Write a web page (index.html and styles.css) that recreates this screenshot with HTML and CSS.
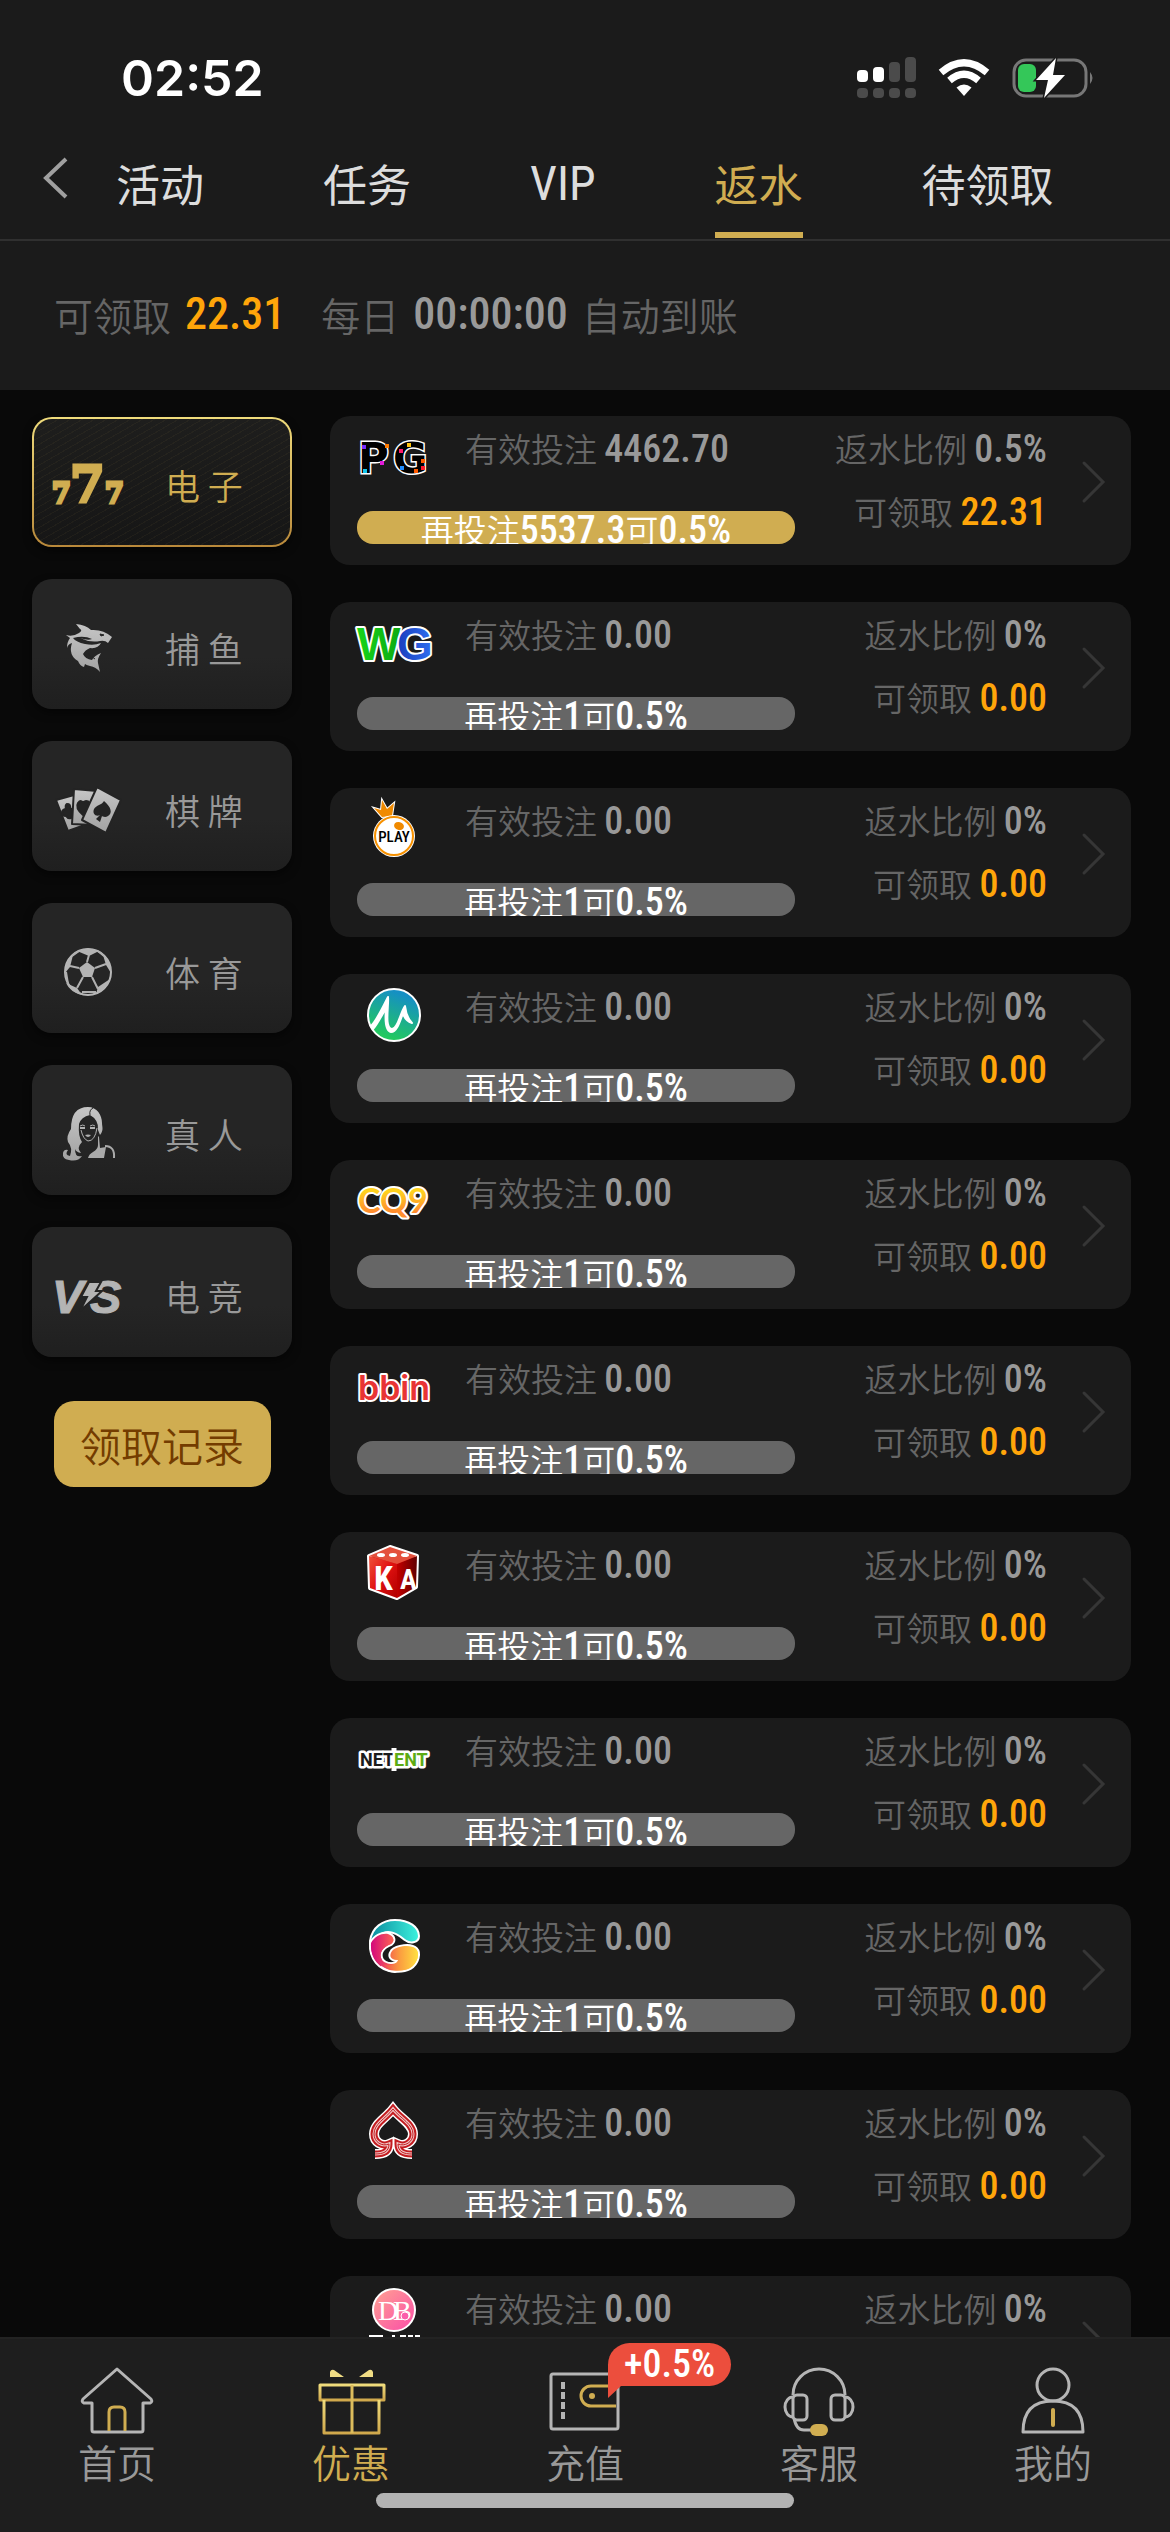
FILE: index.html
```html
<!DOCTYPE html>
<html lang="zh-CN">
<head>
<meta charset="utf-8">
<meta name="viewport" content="width=device-width, initial-scale=1">
<title>返水</title>
<link rel="stylesheet" href="styles.css">
</head>
<body>
<svg class="defs" width="0" height="0" aria-hidden="true">
  <defs>
    <linearGradient id="gold" x1="0" y1="0" x2="0" y2="1"><stop offset="0" stop-color="#f0dc7c"/><stop offset="1" stop-color="#d0a84c"/></linearGradient>
    <linearGradient id="grey" x1="0" y1="0" x2="0" y2="1"><stop offset="0" stop-color="#c6c6c6"/><stop offset="1" stop-color="#a2a2a2"/></linearGradient>
    <symbol id="chevron" viewBox="0 0 26 44"><path d="M3 3 22 22 3 41" fill="none" stroke="#363636" stroke-width="3" stroke-linecap="round"/></symbol>
  </defs>
</svg>
<div class="app">
  <header class="header">
    <div class="status">
      <time class="clock">02:52</time>
      <div class="status-icons">
        <svg width="59" height="42" viewBox="0 0 59 42" aria-hidden="true">
          <g fill="#fff"><rect x="0" y="13" width="11" height="12" rx="4"/><rect x="16" y="10" width="11" height="15" rx="4"/></g>
          <g fill="#4b4b4b"><rect x="32" y="5" width="11" height="20" rx="4"/><rect x="48" y="0" width="11" height="25" rx="4"/><rect x="0" y="31" width="11" height="10" rx="4"/><rect x="16" y="31" width="11" height="10" rx="4"/><rect x="32" y="31" width="11" height="10" rx="4"/><rect x="48" y="31" width="11" height="10" rx="4"/></g>
        </svg>
        <svg width="52" height="38" viewBox="0 0 52 38" aria-hidden="true">
          <g fill="none" stroke="#fff" stroke-width="7"><path d="M3 13.500Q26-6 49 13.500"/><path d="M11.500 21.500Q26 9 40.500 21.500"/></g>
          <path d="M18.500 28.500Q26 22.500 33.500 28.500L26 37Z" fill="#fff"/>
        </svg>
        <svg width="82" height="42" viewBox="0 0 82 42" aria-hidden="true">
          <rect x="2" y="3" width="72" height="36" rx="12" fill="none" stroke="#777" stroke-width="3"/>
          <rect x="6" y="7" width="18" height="28" rx="6" fill="#34c759"/>
          <path d="M78 15q5 6 0 12z" fill="#777"/>
          <path d="M44 1 24 23h12l-4 18 21-23H41z" fill="#fff" stroke="#1b1b1b" stroke-width="3" paint-order="stroke"/>
        </svg>
      </div>
    </div>
    <nav class="tabs">
      <button class="back" aria-label="返回"><svg width="26" height="42" viewBox="0 0 26 42"><path d="M23 2 3 21 23 40" fill="none" stroke="#a0a0a0" stroke-width="4"/></svg></button>
      <a class="tab" href="#activity">活动</a>
      <a class="tab" href="#task">任务</a>
      <a class="tab latin" href="#vip">VIP</a>
      <a class="tab active" href="#rebate" aria-current="page">返水</a>
      <a class="tab" href="#pending">待领取</a>
    </nav>
  </header>

  <section class="summary">
    <span>可领取</span><b class="num amount">22.31</b>
    <span class="daily">每日</span><b class="num">00:00:00</b><span>自动到账</span>
  </section>

  <main class="main">
    <aside class="side">
      <button class="cat active">
        <svg class="cat-icon" viewBox="0 0 80 56" aria-hidden="true"><g class="sevens"><text x="4" y="46" font-size="27">7</text><text x="57" y="46" font-size="27">7</text><text x="22" y="45" font-size="50">7</text></g></svg>
        <span>电 子</span>
      </button>
      <button class="cat">
        <svg class="cat-icon" viewBox="0 0 80 56" aria-hidden="true">
          <path fill="url(#grey)" d="M28 4Q38 5 43 10 55 9 64 17L60 23Q57 20 52 21 42 23 32 18 40 21 44 19 36 15 25 18 28 22 37 24 46 26 53 23 50 29 42 28 37 30 35 34 37 39 44 40 46 36 53 33 49 39 50 43L52 52Q48 47 42 46 38 45 37 44L36 47Q32 46 30 41 20 35 24 23 20 24 19 28 19 22 22 18L18 15Q25 17 31 13 35 10 32 9Z"/>
          <path d="M52 14l4 1-3 1zM47 39l-7-5" fill="#242424" stroke="#242424" stroke-width="1"/>
        </svg>
        <span>捕 鱼</span>
      </button>
      <button class="cat">
        <svg class="cat-icon" viewBox="0 0 80 56" aria-hidden="true">
          <g fill="url(#grey)" stroke="#242424" stroke-width="2" stroke-linejoin="round">
            <path d="M8 18 26 13 34 44 20 49Z"/>
            <path d="M19 22q4 0 3 4 4 1 2 5 2 4-1 5-3 1-5-2-4 0-4-4 1-3 4-3 -1-4 1-5z" fill="#242424"/>
            <path d="M26 7 49 9 45 43 24 42Z"/>
            <path d="M38 19q5 0 2 5l-5 9q-8-7-5-12 3-4 5 0 1-2 3-2z" fill="#242424"/>
            <path d="M49 5 73 18 58 51 34 38Z"/>
          </g>
          <path d="M56 19C63 25 65 31 60 34 57 36 54 34 54 34L52 40 48 37 52 33C48 35 44 32 46 27 48 23 54 23 56 19Z" fill="#242424"/>
        </svg>
        <span>棋 牌</span>
      </button>
      <button class="cat">
        <svg class="cat-icon" viewBox="0 0 80 56" aria-hidden="true">
          <circle cx="40" cy="28" r="23" fill="none" stroke="#b8b8b8" stroke-width="2"/>
          <g fill="#b4b4b4"><path d="M39 18l8 6-3 9H35l-4-9z"/><path d="M29 7q11-5 22 0l-10 5z"/><path d="M55 11q9 7 8 18l-5-8z"/><path d="M62 35q-4 10-14 15l2-7z"/><path d="M34 51q-12-3-16-12l11 5z"/><path d="M17 29q0-12 8-18l-3 12z"/></g>
          <path d="M39 18 41 11M47 24l11-4M44 33l6 12M35 33l-6 11M31 24l-9-2M24 12l7-5M50 7l6 5M34 48l14 0M20 40l-2-12" fill="none" stroke="#b0b0b0" stroke-width="2"/>
        </svg>
        <span>体 育</span>
      </button>
      <button class="cat">
        <svg class="cat-icon" viewBox="0 0 80 56" aria-hidden="true">
          <path fill="url(#grey)" d="M40 1C49 1 54 9 54 17 54 21 56 24 52 29L50 24Q51 14 42 9 33 11 31 18 30 30 34 36 28 42 33 47 28 46 27 43 27 52 34 50 30 56 21 54 14 53 15 47 16 43 20 44 16 49 22 50 25 42 20 36 18 30 23 23 23 1 40 1Z"/>
          <path d="M33 24q2 9 7 11 7 0 9-13" fill="none" stroke="#b0b0b0" stroke-width="1"/>
          <path d="M45 2q-4 2-3 7" fill="none" stroke="#242424" stroke-width="1"/>
          <path d="M32 20q3-2 5 0M42 20q3-2 5 0" stroke="#b0b0b0" fill="none"/>
          <path d="M32 22h5M42 22h5" stroke="#b0b0b0" stroke-width="2"/>
          <path d="M37 29q3-1 6 0-3 4-6 0z" fill="#b0b0b0"/>
          <path d="M50 30v9q0 4-5 7-4 2-5 6h16l2-11-6 1-1-11z" fill="#aaa"/>
          <path d="M57 40q10 0 9 12" fill="none" stroke="#aaa" stroke-width="2"/>
        </svg>
        <span>真 人</span>
      </button>
      <button class="cat">
        <svg class="cat-icon" viewBox="0 0 80 56" aria-hidden="true"><g class="versus"><text x="4" y="45">V</text><text x="42" y="45">S</text></g><path d="M41 14h12l-5 9h6L32 43l7-14h-6z" fill="#b4b4b4" stroke="#242424" stroke-width="2"/></svg>
        <span>电 竞</span>
      </button>
      <button class="record">领取记录</button>
    </aside>

    <section class="list">
      <article class="card">
        <div class="card-main">
          <div class="card-top">
            <svg class="logo" viewBox="0 0 76 76" aria-label="PG"><g class="logo-pg"><text x="1" y="54">P</text><text x="36" y="54">G</text></g>
              <rect x="5" y="26" width="4" height="4" fill="#7a2bff"/><rect x="28" y="25" width="4" height="4" fill="#ff7a00"/><rect x="23" y="42" width="4" height="4" fill="#e21ad8"/><rect x="6" y="50" width="4" height="4" fill="#14c8f0"/><rect x="50" y="24" width="4" height="4" fill="#ffc20e"/><rect x="42" y="30" width="4" height="4" fill="#ff1a6c"/><rect x="64" y="40" width="4" height="4" fill="#ff5a00"/><rect x="64" y="47" width="4" height="4" fill="#ff1a2c"/><rect x="43" y="47" width="4" height="4" fill="#1e8cff"/><rect x="57" y="50" width="4" height="4" fill="#ff5a00"/></svg>
            <p class="bet">有效投注 <b class="num">4462.70</b></p>
          </div>
          <div class="bar gold">再投注<span class="num">5537.3</span>可<span class="num">0.5%</span></div>
        </div>
        <div class="card-side"><p>返水比例 <b class="num">0.5%</b></p><p>可领取 <b class="num amount">22.31</b></p></div>
        <svg class="arrow" aria-hidden="true"><use href="#chevron"/></svg>
      </article>

      <article class="card">
        <div class="card-main">
          <div class="card-top">
            <svg class="logo" viewBox="0 0 76 76" aria-label="WG"><defs><linearGradient id="wgg"><stop stop-color="#16d41a"/><stop offset="1" stop-color="#0eaa12"/></linearGradient><linearGradient id="wgb"><stop stop-color="#1a3dbd"/><stop offset="1" stop-color="#2f6ff0"/></linearGradient></defs><g class="logo-wg"><text x="0" y="55" fill="url(#wgg)">W</text><text x="40" y="55" fill="url(#wgb)">G</text></g></svg>
            <p class="bet">有效投注 <b class="num">0.00</b></p>
          </div>
          <div class="bar">再投注<span class="num">1</span>可<span class="num">0.5%</span></div>
        </div>
        <div class="card-side"><p>返水比例 <b class="num">0%</b></p><p>可领取 <b class="num amount">0.00</b></p></div>
        <svg class="arrow" aria-hidden="true"><use href="#chevron"/></svg>
      </article>

      <article class="card">
        <div class="card-main">
          <div class="card-top">
            <svg class="logo" viewBox="0 0 76 76" aria-label="PLAY"><path d="M25 26 17 17 24 19 25 9 30 18 37 12 35 25Z" fill="#f08a00" stroke="#fff" stroke-width="2" paint-order="stroke"/><circle cx="37" cy="45" r="21" fill="#fff"/><circle cx="37" cy="45" r="19" fill="#fff" stroke="#f79100" stroke-width="2"/><ellipse cx="42" cy="35" rx="5" ry="4" fill="#f08a00" transform="rotate(15 42 35)"/><text class="logo-play" x="37" y="51">PLAY</text></svg>
            <p class="bet">有效投注 <b class="num">0.00</b></p>
          </div>
          <div class="bar">再投注<span class="num">1</span>可<span class="num">0.5%</span></div>
        </div>
        <div class="card-side"><p>返水比例 <b class="num">0%</b></p><p>可领取 <b class="num amount">0.00</b></p></div>
        <svg class="arrow" aria-hidden="true"><use href="#chevron"/></svg>
      </article>

      <article class="card">
        <div class="card-main">
          <div class="card-top">
            <svg class="logo" viewBox="0 0 76 76" aria-hidden="true"><defs><linearGradient id="mgc" x1=".7" y1="0" x2=".3" y2="1"><stop offset=".1" stop-color="#158fc4"/><stop offset=".9" stop-color="#22c860"/></linearGradient></defs><circle cx="37" cy="38" r="26" fill="url(#mgc)" stroke="#fff" stroke-width="2"/><path d="M14 49C20 43 27 28 31 20 32 28 27 52 35 52 41 52 43 36 48 29 49 37 52 43 55 46 49 44 47 40 46 36 43 44 40 55 34 55 28 54 28 42 29 31 25 38 20 48 16 52Z" fill="#fff" stroke="#fff" stroke-width="2" stroke-linejoin="round"/></svg>
            <p class="bet">有效投注 <b class="num">0.00</b></p>
          </div>
          <div class="bar">再投注<span class="num">1</span>可<span class="num">0.5%</span></div>
        </div>
        <div class="card-side"><p>返水比例 <b class="num">0%</b></p><p>可领取 <b class="num amount">0.00</b></p></div>
        <svg class="arrow" aria-hidden="true"><use href="#chevron"/></svg>
      </article>

      <article class="card">
        <div class="card-main">
          <div class="card-top">
            <svg class="logo" viewBox="0 0 76 76" aria-label="CQ9"><defs><linearGradient id="cq" x1="0" y1="0" x2="0" y2="1"><stop offset=".3" stop-color="#ffd21e"/><stop offset=".8" stop-color="#ff8c2e"/></linearGradient></defs><text class="logo-cq" x="1 23 51" y="50" fill="url(#cq)">CQ9</text></svg>
            <p class="bet">有效投注 <b class="num">0.00</b></p>
          </div>
          <div class="bar">再投注<span class="num">1</span>可<span class="num">0.5%</span></div>
        </div>
        <div class="card-side"><p>返水比例 <b class="num">0%</b></p><p>可领取 <b class="num amount">0.00</b></p></div>
        <svg class="arrow" aria-hidden="true"><use href="#chevron"/></svg>
      </article>

      <article class="card">
        <div class="card-main">
          <div class="card-top">
            <svg class="logo" viewBox="0 0 76 76" aria-label="bbin"><text class="logo-bbin" x="37" y="51">bbin</text></svg>
            <p class="bet">有效投注 <b class="num">0.00</b></p>
          </div>
          <div class="bar">再投注<span class="num">1</span>可<span class="num">0.5%</span></div>
        </div>
        <div class="card-side"><p>返水比例 <b class="num">0%</b></p><p>可领取 <b class="num amount">0.00</b></p></div>
        <svg class="arrow" aria-hidden="true"><use href="#chevron"/></svg>
      </article>

      <article class="card">
        <div class="card-main">
          <div class="card-top">
            <svg class="logo" viewBox="0 0 76 76" aria-label="KA"><defs><linearGradient id="kaf" x1="0" y1="0" x2="1" y2="1"><stop stop-color="#f0503a"/><stop offset=".5" stop-color="#e01010"/><stop offset="1" stop-color="#b00000"/></linearGradient><linearGradient id="kas"><stop stop-color="#c40000"/><stop offset="1" stop-color="#600000"/></linearGradient></defs><path d="M33 12 60 21 59 52 40 63 13 53 12 21Z" fill="#c00" stroke="#fff" stroke-width="4" stroke-linejoin="round"/><path d="M12 21 40 29V63L13 53Z" fill="url(#kaf)"/><path d="M40 29 60 21 59 52 40 63Z" fill="url(#kas)"/><path d="M33 12 60 21 40 29 12 21Z" fill="#e4503c"/><g fill="#fff"><ellipse cx="24" cy="20" rx="4" ry="2"/><ellipse cx="36" cy="20" rx="4" ry="2"/><ellipse cx="48" cy="20" rx="4" ry="2"/></g><text class="logo-ka" x="17" y="55">K</text><text class="logo-ka" x="43" y="54">A</text></svg>
            <p class="bet">有效投注 <b class="num">0.00</b></p>
          </div>
          <div class="bar">再投注<span class="num">1</span>可<span class="num">0.5%</span></div>
        </div>
        <div class="card-side"><p>返水比例 <b class="num">0%</b></p><p>可领取 <b class="num amount">0.00</b></p></div>
        <svg class="arrow" aria-hidden="true"><use href="#chevron"/></svg>
      </article>

      <article class="card">
        <div class="card-main">
          <div class="card-top">
            <svg class="logo" viewBox="0 0 76 76" aria-label="NETENT"><path d="M37 27v23" stroke="#fff" stroke-width="5"/><g class="logo-net"><text x="3" y="45" fill="#1c1c1c">NET</text><text x="37" y="45" fill="#5cab14">ENT</text></g></svg>
            <p class="bet">有效投注 <b class="num">0.00</b></p>
          </div>
          <div class="bar">再投注<span class="num">1</span>可<span class="num">0.5%</span></div>
        </div>
        <div class="card-side"><p>返水比例 <b class="num">0%</b></p><p>可领取 <b class="num amount">0.00</b></p></div>
        <svg class="arrow" aria-hidden="true"><use href="#chevron"/></svg>
      </article>

      <article class="card">
        <div class="card-main">
          <div class="card-top">
            <svg class="logo" viewBox="0 0 76 76" aria-hidden="true"><defs><linearGradient id="g1"><stop stop-color="#0c8ea0"/><stop offset="1" stop-color="#3cf0dc"/></linearGradient><linearGradient id="g2"><stop stop-color="#d4087c"/><stop offset="1" stop-color="#ff6a50"/></linearGradient><linearGradient id="g3"><stop stop-color="#f04a50"/><stop offset=".5" stop-color="#fba040"/><stop offset="1" stop-color="#ffe040"/></linearGradient></defs><g stroke="#fff" stroke-width="4" stroke-linejoin="round" paint-order="stroke"><path d="M14 34C16 21 26 14 38 14 52 14 61 21 61 29 61 35 53 36 48 32 42 27 34 22 26 25 20 28 17 34 15 42Z" fill="url(#g1)"/><path d="M14 36C18 29 25 26 31 27 37 29 38 34 34 37 26 40 21 46 25 53 28 57 33 58 38 57L38 64C22 63 13 51 14 36Z" fill="url(#g2)"/><path d="M26 59C31 65 46 65 53 61 61 56 63 46 59 42 54 37 40 39 35 44 31 50 35 53 41 53 41 57 32 59 26 55Z" fill="url(#g3)"/></g><path d="M14 38C17 31 22 27 31 28 37 30 38 34 34 37 26 40 21 46 25 53 29 58 38 57 38 57L36 63C22 61 14 52 14 38Z" fill="url(#g2)"/><path d="M26 57C31 64 46 65 53 61 61 56 63 46 59 42 54 38 40 40 36 45 32 50 37 53 41 53 41 57 32 60 26 57Z" fill="url(#g3)"/></svg>
            <p class="bet">有效投注 <b class="num">0.00</b></p>
          </div>
          <div class="bar">再投注<span class="num">1</span>可<span class="num">0.5%</span></div>
        </div>
        <div class="card-side"><p>返水比例 <b class="num">0%</b></p><p>可领取 <b class="num amount">0.00</b></p></div>
        <svg class="arrow" aria-hidden="true"><use href="#chevron"/></svg>
      </article>

      <article class="card">
        <div class="card-main">
          <div class="card-top">
            <svg class="logo" viewBox="0 0 76 76" aria-hidden="true"><defs><path id="spade" d="M18 61C26 61 32 59 32 51 25 54 17 49 17 41 17 31 28 26 36 16 44 26 56 31 56 41 56 49 48 54 41 51 41 59 47 61 55 61"/></defs><g fill="none"><use href="#spade" stroke="#fff" stroke-width="10"/><use href="#spade" stroke="#c41c20" stroke-width="7"/><use href="#spade" stroke="#f0c4c4" stroke-width="3"/><use href="#spade" stroke="#c41c20" stroke-width="1"/></g></svg>
            <p class="bet">有效投注 <b class="num">0.00</b></p>
          </div>
          <div class="bar">再投注<span class="num">1</span>可<span class="num">0.5%</span></div>
        </div>
        <div class="card-side"><p>返水比例 <b class="num">0%</b></p><p>可领取 <b class="num amount">0.00</b></p></div>
        <svg class="arrow" aria-hidden="true"><use href="#chevron"/></svg>
      </article>

      <article class="card">
        <div class="card-main">
          <div class="card-top">
            <svg class="logo" viewBox="0 0 76 76" aria-label="DB"><defs><linearGradient id="db" x1="0" y1="0" x2="1" y2="1"><stop offset=".1" stop-color="#ff9a94"/><stop offset="1" stop-color="#fa4ca8"/></linearGradient></defs><circle cx="37" cy="31" r="21" fill="url(#db)" stroke="#fff" stroke-width="2"/><g class="logo-db"><text x="21" y="41">D</text><text x="36" y="41">B</text></g><circle cx="48" cy="37" r="4" fill="#fb5eaa" stroke="#fff"/><path d="M12 57h14M35 57h3M43 57h6M51 57h5M58 57h5" stroke="#fff" stroke-width="2"/></svg>
            <p class="bet">有效投注 <b class="num">0.00</b></p>
          </div>
          <div class="bar">再投注<span class="num">1</span>可<span class="num">0.5%</span></div>
        </div>
        <div class="card-side"><p>返水比例 <b class="num">0%</b></p><p>可领取 <b class="num amount">0.00</b></p></div>
        <svg class="arrow" aria-hidden="true"><use href="#chevron"/></svg>
      </article>
    </section>
  </main>

  <nav class="dock">
    <a class="dock-item" href="#home">
      <svg class="dock-icon" viewBox="0 0 78 72" aria-hidden="true"><path d="M14 37H6q-3-1-1-4L39 3 73 33q2 3-1 4H65V64q0 2-2 2H16q-2 0-2-2Z" fill="none" stroke="#b5b5b5" stroke-width="3" stroke-linejoin="round"/><path d="M31 65V46q0-5 5-5h6q5 0 5 5V65" fill="none" stroke="#d0ad51" stroke-width="3"/></svg>
      <span>首页</span>
    </a>
    <a class="dock-item active" href="#promo" aria-current="page">
      <svg class="dock-icon" viewBox="0 0 78 72" aria-hidden="true"><g fill="none" stroke="url(#gold)" stroke-width="3" stroke-linejoin="round"><rect x="8" y="19" width="64" height="15"/><path d="M12 34V67H67V34"/></g><path d="M40 19V67" stroke="#dcbc5c" stroke-width="3"/><path d="M18 11V6q1-3 4-2L32 11ZM61 11V6q-1-3-4-2L47 11Z" fill="#f0dc84"/></svg>
      <span>优惠</span>
    </a>
    <a class="dock-item" href="#deposit">
      <svg class="dock-icon" viewBox="0 0 78 72" aria-hidden="true"><rect x="5" y="8" width="67" height="55" rx="2" fill="none" stroke="#b5b5b5" stroke-width="3"/><path d="M17 16V53" stroke="#b5b5b5" stroke-width="4" stroke-dasharray="7 3"/><path d="M70 20H45a10 10 0 0 0 0 20H70" fill="none" stroke="#d0ad51" stroke-width="3"/><circle cx="46" cy="30" r="3" fill="#d0ad51"/></svg>
      <span>充值</span>
      <em class="badge num">+0.5%</em>
    </a>
    <a class="dock-item" href="#service">
      <svg class="dock-icon" viewBox="0 0 78 72" aria-hidden="true"><g fill="none" stroke="#b5b5b5" stroke-width="3"><path d="M13 29A26 26 0 0 1 65 29"/><rect x="13" y="29" width="14" height="25" rx="4"/><rect x="51" y="29" width="14" height="25" rx="4"/><path d="M13 31a8 10 0 0 0 0 20M65 31a8 10 0 0 1 0 20M14 52q2 12 10 12h8"/></g><rect x="30" y="58" width="18" height="12" rx="6" fill="#d0ad51"/></svg>
      <span>客服</span>
    </a>
    <a class="dock-item" href="#me">
      <svg class="dock-icon" viewBox="0 0 78 72" aria-hidden="true"><g fill="none" stroke="#b5b5b5" stroke-width="3"><circle cx="39" cy="19" r="16"/><path d="M9 66Q9 35 39 35T69 66Z" stroke-linejoin="round"/></g><path d="M39 44V59" stroke="#d0ad51" stroke-width="4" stroke-linecap="round"/></svg>
      <span>我的</span>
    </a>
    <div class="home-bar"></div>
  </nav>
</div>
</body>
</html>
```

FILE: styles.css
```css
* { box-sizing: border-box; }

body {
  margin: 0;
  background: #090909;
  color: #666;
  font-family: "Noto Sans CJK SC", sans-serif;
  font-weight: 350;
}

p { margin: 0; }
a { text-decoration: none; color: inherit; }
button { border: 0; padding: 0; background: none; font: inherit; color: inherit; }
.defs { position: absolute; }

.app { display: flex; flex-direction: column; height: 100vh; }

.num {
  font-family: "Roboto Condensed", "Liberation Sans Narrow", Roboto, sans-serif;
  font-weight: 500;
  font-size: 38px;
  line-height: 1;
  color: #999;
}
.num.amount { color: #ffa50a; }

.header { background: #1b1b1b; border-bottom: 2px solid #303030; }

.status {
  display: flex;
  justify-content: space-between;
  align-items: center;
  height: 156px;
  padding: 0 76px 0 121px;
}
.clock { font: 600 50px/1 Inter, sans-serif; color: #fff; }
.status-icons { display: flex; align-items: center; gap: 22px; }

.tabs {
  display: flex;
  align-items: stretch;
  gap: 119px;
  height: 83px;
  padding-left: 43px;
}
.back { width: 26px; height: 42px; margin: 1px -72px 0 0; }
.back svg { display: block; }
.tab {
  height: 82px;
  border-bottom: 6px solid transparent;
  font-size: 44px;
  font-weight: 400;
  line-height: 55px;
  color: #ddd;
}
.tab.latin { font-family: "Roboto Condensed", Roboto, sans-serif; font-size: 48px; }
.tab.active { color: #d0ad51; border-color: #d0ad51; }

.summary {
  display: flex;
  align-items: center;
  gap: 14px;
  height: 149px;
  padding: 0 54px 4px;
  background: #1b1b1b;
  font-size: 39px;
}
.summary .num { font-size: 44px; }
.daily { margin-left: 22px; }

.main {
  display: flex;
  flex: 1;
  min-height: 0;
  gap: 38px;
  padding: 0 39px 0 32px;
}

.side { display: flex; flex-direction: column; gap: 32px; width: 260px; padding-top: 27px; }
.cat {
  display: flex;
  align-items: center;
  gap: 37px;
  flex: none;
  height: 130px;
  padding: 8px 16px 0;
  border-radius: 20px;
  background: linear-gradient(#252525 60%, #1f1f1f);
  box-shadow: 0 4px 8px rgba(0, 0, 0, .5);
  font-size: 35px;
  line-height: 40px;
  color: #999;
}
.cat.active {
  border: 2px solid transparent;
  padding: 6px 14px 0;
  background:
    repeating-linear-gradient(150deg, rgba(208, 173, 81, .05) 0 1px, transparent 1px 6px) padding-box,
    linear-gradient(#1e1e1d, #161616) padding-box,
    linear-gradient(#f0dc7c, #b8883a) border-box;
  color: #d0ad51;
}
.cat-icon { width: 80px; height: 56px; flex: none; }
.sevens { font-family: "DejaVu Serif", serif; font-weight: 700; fill: #d0ad51; stroke: #d0ad51; stroke-width: 3px; }
.versus { font: italic 700 47px "Liberation Sans", sans-serif; fill: #b4b4b4; stroke: #b4b4b4; stroke-width: 1px; }

.record {
  align-self: center;
  flex: none;
  width: 217px;
  height: 86px;
  margin-top: 12px;
  border-radius: 20px;
  background: #d0ad51;
  font-size: 41px;
  color: #733c00;
}

.list {
  display: flex;
  flex: 1;
  flex-direction: column;
  gap: 37px;
  padding-top: 26px;
  overflow-y: auto;
  scrollbar-width: none;
}
.card {
  display: flex;
  flex: none;
  height: 149px;
  padding: 1px 24px 20px 27px;
  border-radius: 20px;
  background: #1b1b1b;
  font-size: 33px;
}
.card-main { flex: 0 1 438px; }
.card-top { display: flex; gap: 32px; }
.logo { width: 76px; height: 76px; margin-top: 2px; flex: none; overflow: visible; }
.bet, .card-side p { line-height: 63px; white-space: nowrap; }
.bar {
  height: 33px;
  margin-top: 16px;
  overflow: hidden;
  border-radius: 16px;
  background: #666;
  color: #fff;
  line-height: 33px;
  text-align: center;
}
.bar.gold { background: #d0ad51; }
.bar .num { color: #fff; }
.card-side { flex: 1; text-align: right; }
.arrow { width: 26px; height: 44px; margin: 43px 0 0 34px; flex: none; }

.logo-pg { font: 700 42px "DejaVu Sans", sans-serif; fill: #000; stroke: #fff; stroke-width: 3px; paint-order: stroke; }
.logo-wg { font: 700 46px "Liberation Sans", sans-serif; stroke: #fff; stroke-width: 4px; paint-order: stroke; stroke-linejoin: round; }
.logo-play { font: 500 15px "Roboto Condensed", Roboto, sans-serif; fill: #000; text-anchor: middle; }
.logo-cq { font: 700 34px Lato, sans-serif; stroke: #fff; stroke-width: 4px; paint-order: stroke; stroke-linejoin: round; }
.logo-bbin { font: 600 34px Inter, sans-serif; fill: #e83434; stroke: #fff; stroke-width: 4px; paint-order: stroke; stroke-linejoin: round; text-anchor: middle; }
.logo-ka { font: 700 34px "Roboto Condensed", Roboto, sans-serif; fill: #fff; }
.logo-ka + .logo-ka { font-size: 28px; }
.logo-net { font: 700 18px Roboto, sans-serif; stroke: #fff; stroke-width: 5px; paint-order: stroke; stroke-linejoin: round; }
.logo-db { font: 400 28px "Liberation Serif", serif; fill: #fff; }

.dock {
  display: grid;
  grid-template-columns: repeat(5, 1fr);
  flex: none;
  height: 195px;
  padding-top: 27px;
  position: relative;
  background: #1e1e1e;
  border-top: 2px solid #232323;
}
.dock-item {
  display: flex;
  flex-direction: column;
  align-items: center;
  position: relative;
  font-size: 39px;
  line-height: 47px;
  color: #999;
}
.dock-item.active { color: #d0ad51; }
.dock-icon { width: 78px; height: 72px; }
.badge {
  position: absolute;
  top: -23px;
  left: 140px;
  padding: 0 16px;
  border-radius: 22px 22px 22px 0;
  background: #ec4e3d;
  color: #fff;
  font-style: normal;
  line-height: 43px;
}
.badge::after {
  content: "";
  position: absolute;
  top: 100%;
  left: 0;
  border-top: 12px solid #ec4e3d;
  border-right: 13px solid transparent;
}
.home-bar {
  position: absolute;
  bottom: 24px;
  left: 50%;
  width: 418px;
  height: 15px;
  margin-left: -209px;
  border-radius: 8px;
  background: #b3b3b3;
}
```
